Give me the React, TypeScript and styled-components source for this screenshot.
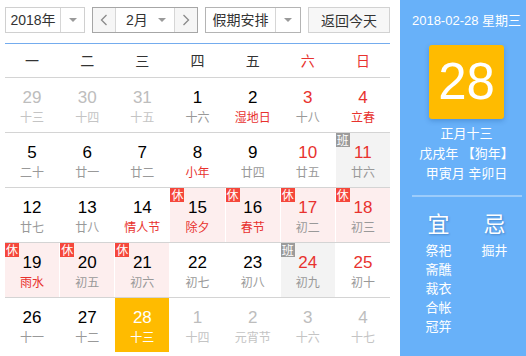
import React from "react";
import styled, { createGlobalStyle } from "styled-components";

const Global = createGlobalStyle`
  html, body { margin: 0; padding: 0; background: #fff; }
  body { font-family: "Liberation Sans", Arial, "Noto Sans CJK SC", sans-serif; }
  * { box-sizing: border-box; }
`;

const Page = styled.div`
  display: flex;
  width: 526px;
  height: 356px;
  overflow: hidden;
`;

const Left = styled.div`
  width: 400px;
  flex: none;
  padding: 7px 10px 0 5px;
`;

const Toolbar = styled.div`
  display: flex;
  justify-content: space-between;
  height: 26px;
  margin-bottom: 10px;
`;

const Box = styled.div<{ $w: number; $border: string }>`
  display: flex;
  width: ${(p) => p.$w}px;
  height: 26px;
  border: 1px solid ${(p) => p.$border};
  background: #fff;
  font-size: 14px;
  color: #333;
`;

const Label = styled.div<{ $pl?: number }>`
  flex: 1;
  display: flex;
  align-items: center;
  justify-content: ${(p) => (p.$pl !== undefined ? "flex-start" : "center")};
  padding-left: ${(p) => p.$pl ?? 0}px;
  line-height: 24px;
`;

const ArrowCell = styled.div<{ $w: number; $divider?: boolean }>`
  width: ${(p) => p.$w}px;
  flex: none;
  display: flex;
  align-items: center;
  justify-content: center;
  border-left: ${(p) => (p.$divider ? "1px solid #d6d6d6" : "none")};
`;

const Triangle = styled.span`
  width: 0;
  height: 0;
  border-left: 4px solid transparent;
  border-right: 4px solid transparent;
  border-top: 4px solid #9a9a9a;
`;

const NavBtn = styled.div<{ $side: "l" | "r" }>`
  width: 23px;
  flex: none;
  display: flex;
  align-items: center;
  justify-content: center;
  background: #f6f6f6;
  border-${(p) => (p.$side === "l" ? "right" : "left")}: 1px solid #d6d6d6;
`;

const TodayBtn = styled.div`
  width: 82px;
  height: 26px;
  border: 1px solid #d2d2d2;
  background: #f7f7f7;
  font-size: 14px;
  color: #333;
  display: flex;
  align-items: center;
  justify-content: center;
`;

const WeekHead = styled.div`
  display: grid;
  grid-template-columns: repeat(7, 1fr);
  column-gap: 1px;
  border-top: 1px solid #74acee;
  border-bottom: 1px solid #d4d4d4;
  height: 35px;
`;

const WeekName = styled.div<{ $red?: boolean }>`
  text-align: center;
  line-height: 33px;
  font-size: 14px;
  font-family: "Noto Sans CJK SC", sans-serif;
  color: ${(p) => (p.$red ? "#e8322e" : "#333")};
`;

const Row = styled.div<{ $last?: boolean }>`
  display: grid;
  grid-template-columns: repeat(7, 1fr);
  column-gap: 1px;
  height: 55px;
  border-bottom: ${(p) => (p.$last ? "none" : "1px solid #d4d4d4")};
`;

type Kind = "normal" | "holiday" | "work" | "today";

const bgFor: Record<Kind, string> = {
  normal: "#fff",
  holiday: "#fdeeee",
  work: "#f3f3f3",
  today: "#ffbb00",
};

const Cell = styled.div<{ $kind: Kind }>`
  position: relative;
  height: 54px;
  padding-top: 10px;
  text-align: center;
  background: ${(p) => bgFor[p.$kind]};
`;

const Num = styled.div<{ $color: string }>`
  font-size: 17px;
  line-height: 20px;
  color: ${(p) => p.$color};
`;

const Lunar = styled.div<{ $color: string }>`
  font-size: 12px;
  line-height: 17px;
  font-family: "Noto Sans CJK SC", sans-serif;
  color: ${(p) => p.$color};
`;

const Badge = styled.span<{ $work?: boolean }>`
  position: absolute;
  left: 0;
  top: 0;
  width: 14px;
  height: 14px;
  font-size: 12px;
  line-height: 14px;
  text-align: center;
  color: #fff;
  font-family: "Noto Sans CJK SC", sans-serif;
  background: ${(p) => (p.$work ? "#9b9b9b" : "#f5473b")};
`;

const Right = styled.div`
  flex: none;
  width: 126px;
  background: #68b1f9;
  color: #fff;
  padding: 12px 0 0 7px;
  display: flex;
  flex-direction: column;
  align-items: center;
  font-family: "Liberation Sans", Arial, "Noto Sans CJK SC", sans-serif;
`;

const DateLine = styled.div`
  font-size: 13px;
  line-height: 18px;
  white-space: nowrap;
`;

const BigDay = styled.div`
  margin-top: 15px;
  width: 75px;
  height: 74px;
  border-radius: 3px;
  background: #ffbb00;
  box-shadow: 0 2px 5px rgba(0, 60, 130, 0.25);
  font-size: 51px;
  line-height: 74px;
  text-align: center;
`;

const InfoLines = styled.div`
  margin-top: 5px;
  font-size: 13px;
  line-height: 20px;
  text-align: center;
  white-space: nowrap;
`;

const Sep = styled.div`
  margin-top: 11px;
  width: 110px;
  height: 2px;
  background: rgba(255, 255, 255, 0.35);
`;

const YiJi = styled.div`
  display: flex;
  margin-top: 11px;
`;

const YiCol = styled.div`
  width: 56px;
  text-align: center;
`;

const YiHead = styled.div`
  font-size: 22px;
  line-height: 28px;
  font-family: "Noto Sans CJK SC", sans-serif;
  text-shadow: 1px 1px 2px rgba(0, 40, 100, 0.3);
  margin-bottom: 4px;
`;

const YiItem = styled.div`
  font-size: 13px;
  line-height: 19px;
  font-family: "Noto Sans CJK SC", sans-serif;
`;

const Chevron = ({ dir }: { dir: "l" | "r" }) => (
  <svg width="8" height="12" viewBox="0 0 8 12">
    <path
      d={dir === "l" ? "M6.5 1 L1.5 6 L6.5 11" : "M1.5 1 L6.5 6 L1.5 11"}
      fill="none"
      stroke="#8a8a8a"
      strokeWidth="1.3"
    />
  </svg>
);

type Day = {
  d: number;
  l: string;
  other?: boolean;
  red?: boolean;
  lred?: boolean;
  kind?: Kind;
};

const rows: Day[][] = [
  [
    { d: 29, l: "十三", other: true },
    { d: 30, l: "十四", other: true },
    { d: 31, l: "十五", other: true },
    { d: 1, l: "十六" },
    { d: 2, l: "湿地日", lred: true },
    { d: 3, l: "十八", red: true },
    { d: 4, l: "立春", red: true, lred: true },
  ],
  [
    { d: 5, l: "二十" },
    { d: 6, l: "廿一" },
    { d: 7, l: "廿二" },
    { d: 8, l: "小年", lred: true },
    { d: 9, l: "廿四" },
    { d: 10, l: "廿五", red: true },
    { d: 11, l: "廿六", red: true, kind: "work" },
  ],
  [
    { d: 12, l: "廿七" },
    { d: 13, l: "廿八" },
    { d: 14, l: "情人节", lred: true },
    { d: 15, l: "除夕", lred: true, kind: "holiday" },
    { d: 16, l: "春节", lred: true, kind: "holiday" },
    { d: 17, l: "初二", red: true, kind: "holiday" },
    { d: 18, l: "初三", red: true, kind: "holiday" },
  ],
  [
    { d: 19, l: "雨水", lred: true, kind: "holiday" },
    { d: 20, l: "初五", kind: "holiday" },
    { d: 21, l: "初六", kind: "holiday" },
    { d: 22, l: "初七" },
    { d: 23, l: "初八" },
    { d: 24, l: "初九", red: true, kind: "work" },
    { d: 25, l: "初十", red: true },
  ],
  [
    { d: 26, l: "十一" },
    { d: 27, l: "十二" },
    { d: 28, l: "十三", kind: "today" },
    { d: 1, l: "十四", other: true },
    { d: 2, l: "元宵节", other: true },
    { d: 3, l: "十六", other: true },
    { d: 4, l: "十七", other: true },
  ],
];

const weekNames = ["一", "二", "三", "四", "五", "六", "日"];

function numColor(day: Day): string {
  if (day.kind === "today") return "#fff";
  if (day.other) return "#bdbdbd";
  if (day.red) return "#e8322e";
  return "#000";
}

function lunarColor(day: Day): string {
  if (day.kind === "today") return "#fff";
  if (day.other) return "#c4c4c4";
  if (day.lred) return "#e8322e";
  return "#999";
}

export default function App() {
  return (
    <>
      <Global />
      <Page>
        <Left>
          <Toolbar>
            <Box $w={80} $border="#d0d0d0">
              <Label>2018年</Label>
              <ArrowCell $w={24} $divider>
                <Triangle />
              </ArrowCell>
            </Box>
            <Box $w={106} $border="#a6a6a6">
              <NavBtn $side="l">
                <Chevron dir="l" />
              </NavBtn>
              <Label $pl={10}>2月</Label>
              <ArrowCell $w={24}>
                <Triangle />
              </ArrowCell>
              <NavBtn $side="r">
                <Chevron dir="r" />
              </NavBtn>
            </Box>
            <Box $w={96} $border="#b4b4b4">
              <Label>假期安排</Label>
              <ArrowCell $w={25} $divider>
                <Triangle />
              </ArrowCell>
            </Box>
            <TodayBtn>返回今天</TodayBtn>
          </Toolbar>
          <WeekHead>
            {weekNames.map((w, i) => (
              <WeekName key={w} $red={i >= 5}>
                {w}
              </WeekName>
            ))}
          </WeekHead>
          {rows.map((r, ri) => (
            <Row key={ri} $last={ri === rows.length - 1}>
              {r.map((day, ci) => (
                <Cell key={ci} $kind={day.kind ?? "normal"}>
                  {day.kind === "holiday" && <Badge>休</Badge>}
                  {day.kind === "work" && <Badge $work>班</Badge>}
                  <Num $color={numColor(day)}>{day.d}</Num>
                  <Lunar $color={lunarColor(day)}>{day.l}</Lunar>
                </Cell>
              ))}
            </Row>
          ))}
        </Left>
        <Right>
          <DateLine>2018-02-28 星期三</DateLine>
          <BigDay>28</BigDay>
          <InfoLines>
            <div>正月十三</div>
            <div>戊戌年 【狗年】</div>
            <div>甲寅月 辛卯日</div>
          </InfoLines>
          <Sep />
          <YiJi>
            <YiCol>
              <YiHead>宜</YiHead>
              <YiItem>祭祀</YiItem>
              <YiItem>斋醮</YiItem>
              <YiItem>裁衣</YiItem>
              <YiItem>合帐</YiItem>
              <YiItem>冠笄</YiItem>
            </YiCol>
            <YiCol>
              <YiHead>忌</YiHead>
              <YiItem>掘井</YiItem>
            </YiCol>
          </YiJi>
        </Right>
      </Page>
    </>
  );
}
